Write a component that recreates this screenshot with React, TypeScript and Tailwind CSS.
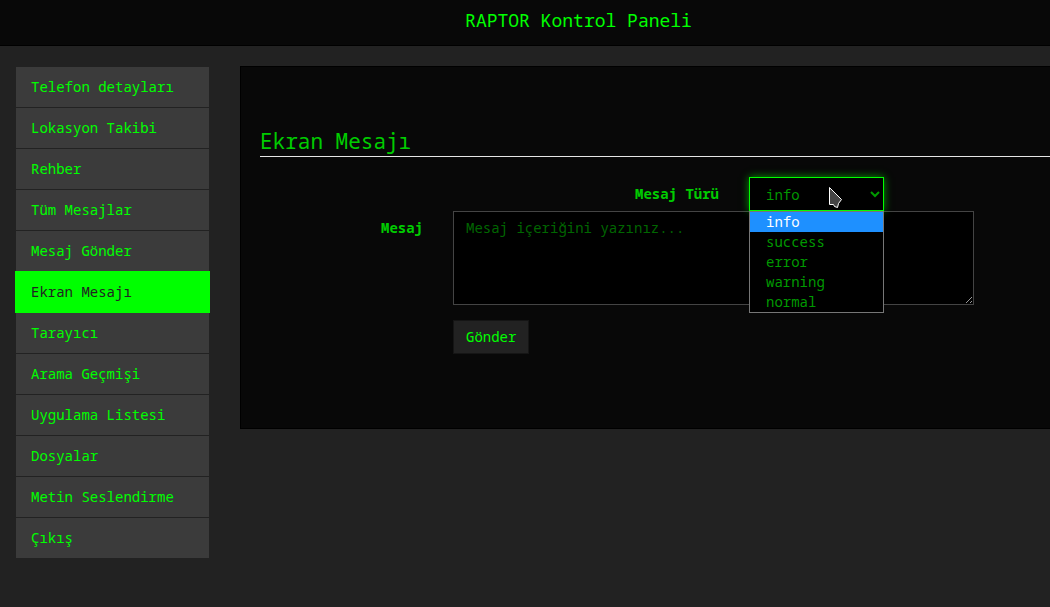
import { useState } from "react";

const menu = [
  "Telefon detayları",
  "Lokasyon Takibi",
  "Rehber",
  "Tüm Mesajlar",
  "Mesaj Gönder",
  "Ekran Mesajı",
  "Tarayıcı",
  "Arama Geçmişi",
  "Uygulama Listesi",
  "Dosyalar",
  "Metin Seslendirme",
  "Çıkış",
];

const types = ["info", "success", "error", "warning", "normal"];

function Sidebar() {
  return (
    <nav aria-label="Menü" className="w-[195px] shrink-0">
      <ul>
        {menu.map((item) => {
          const active = item === "Ekran Mesajı";
          return (
            <li key={item} className="-mb-px">
              <a
                href="#"
                aria-current={active ? "page" : undefined}
                className={
                  active
                    ? "relative z-10 block border border-[#00ff00] bg-[#00ff00] px-[15px] py-[10px] text-[#222222]"
                    : "block border border-[#222222] bg-[#3b3b3b] px-[15px] py-[10px] text-[#00ff00]"
                }
              >
                {item}
              </a>
            </li>
          );
        })}
      </ul>
    </nav>
  );
}

function Cursor() {
  return (
    <svg
      aria-hidden="true"
      className="pointer-events-none absolute top-[9px] left-[79px] z-20"
      width="15"
      height="23"
      viewBox="0 0 15 23"
    >
      <path
        d="M1.5 1.5V18.5H5.5L6.5 20.5L9.5 21.5L10.5 17.5L13.5 13.5Z"
        fill="#454545"
        stroke="#ffffff"
        strokeWidth="1"
      />
    </svg>
  );
}

function TypeSelect() {
  const [value, setValue] = useState("info");
  return (
    <div className="relative w-[135px] shrink-0">
      <select
        id="type"
        value={value}
        onChange={(e) => setValue(e.target.value)}
        className="block h-[34px] w-full appearance-none border border-[#00ff00] bg-black px-4 pt-0.5 text-[#009900] shadow-[0_0_8px_rgba(0,255,0,0.6)] outline-none"
      >
        {types.map((t) => (
          <option key={t}>{t}</option>
        ))}
      </select>
      <svg
        aria-hidden="true"
        className="pointer-events-none absolute top-[13px] right-1"
        width="10"
        height="8"
        viewBox="0 0 10 8"
      >
        <path d="M1 2L5 6L9 2" fill="none" stroke="#009900" strokeWidth="2" />
      </svg>
      <ul
        role="listbox"
        aria-label="Mesaj Türü"
        className="absolute top-full left-0 z-10 w-full border border-[#767676] bg-black"
      >
        {types.map((t) => (
          <li
            key={t}
            role="option"
            aria-selected={t === value}
            onClick={() => setValue(t)}
            className={
              t === value
                ? "bg-[#1e90ff] px-4 leading-5 text-white"
                : "px-4 leading-5 text-[#009900]"
            }
          >
            {t}
          </li>
        ))}
      </ul>
      <Cursor />
    </div>
  );
}

export default function App() {
  return (
    <div className="min-h-screen bg-[#222222] font-['Noto_Sans_Mono','DejaVu_Sans_Mono',monospace] text-sm leading-5 text-[#00cc00]">
      <header className="flex h-[46px] items-center justify-center border-b border-black bg-[#080808] pb-1.5 pl-[107px]">
        <a href="#" className="text-lg leading-5 text-[#00ff00]">
          RAPTOR Kontrol Paneli
        </a>
      </header>
      <div className="flex items-start gap-[30px] pt-5 pl-[15px]">
        <Sidebar />
        <main className="min-w-0 flex-1 border-y border-l border-black bg-[#080808] pt-[60px] pb-[74px] pl-[19px]">
          <h1 className="border-b border-[#e5e5e5] pt-0.5 pb-[3px] text-[21px] leading-6">
            Ekran Mesajı
          </h1>
          <form className="pt-5" onSubmit={(e) => e.preventDefault()}>
            <div className="flex justify-end gap-[30px] pr-[166px]">
              <label htmlFor="type" className="pt-[7px] font-bold">
                Mesaj Türü
              </label>
              <TypeSelect />
            </div>
            <div className="flex gap-[30px] pr-[76px]">
              <label htmlFor="message" className="w-[163px] shrink-0 pt-[7px] text-right font-bold">
                Mesaj
              </label>
              <textarea
                id="message"
                rows={4}
                placeholder="Mesaj içeriğini yazınız..."
                className="block min-w-0 flex-1 resize border border-[#444444] bg-black px-3 py-1.5 placeholder:text-[#006600]"
              />
            </div>
            <div className="pt-[15px] pl-[193px]">
              <button
                type="submit"
                className="block border border-[#151515] bg-[#222222] px-3 py-1.5 text-[#00ff00]"
              >
                Gönder
              </button>
            </div>
          </form>
        </main>
      </div>
    </div>
  );
}
